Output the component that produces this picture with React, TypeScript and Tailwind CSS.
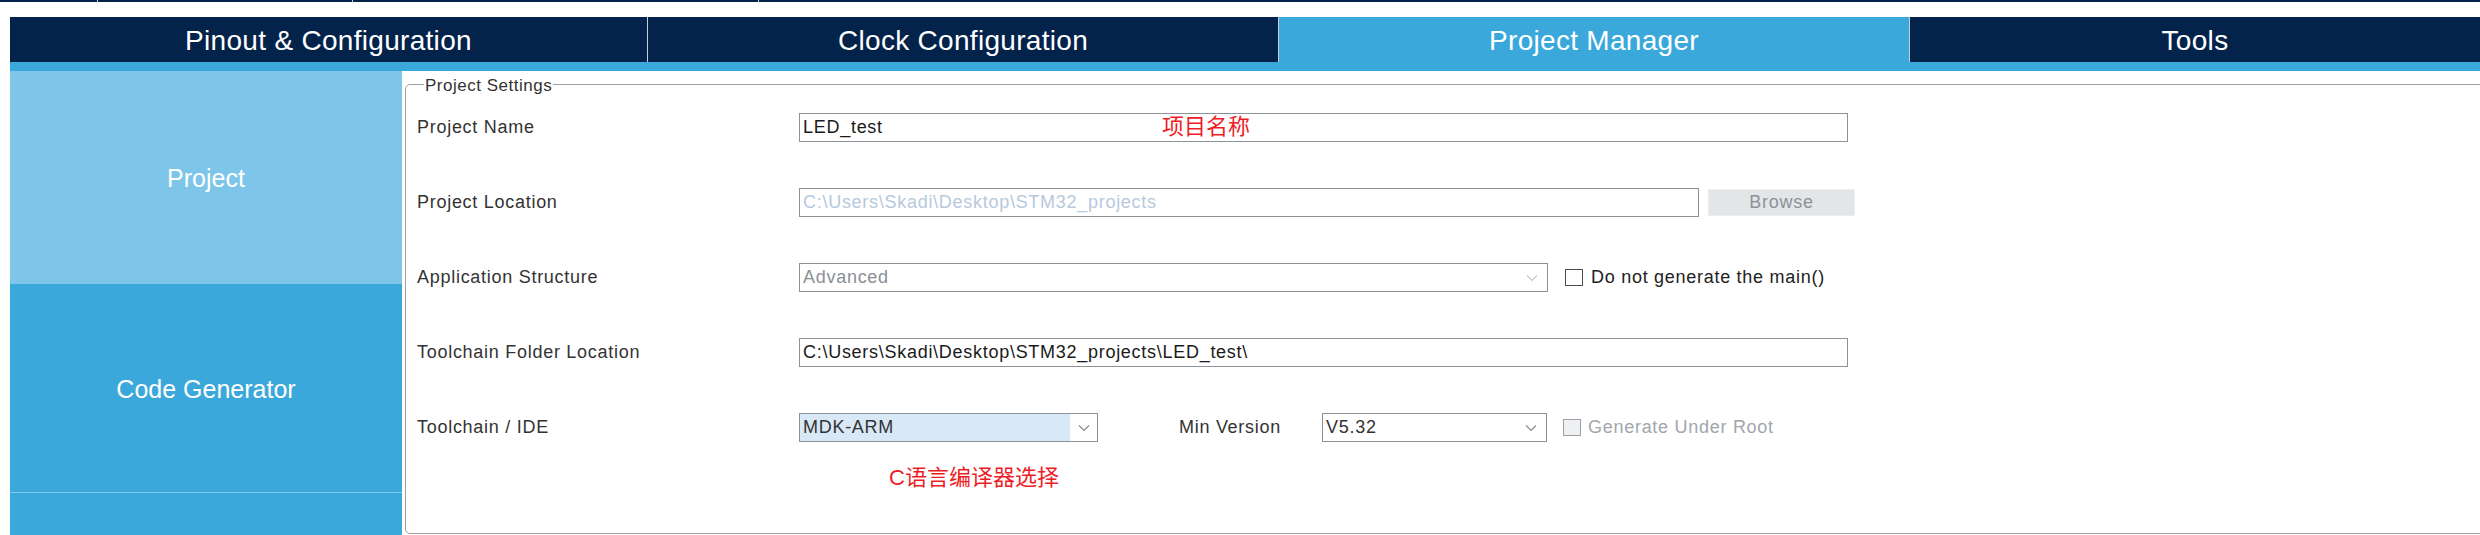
import React from 'react';

const tabs = [
  { label: 'Pinout & Configuration', width: 'w-[637px]', active: false },
  { label: 'Clock Configuration', width: 'w-[630px]', active: false },
  { label: 'Project Manager', width: 'w-[630px]', active: true },
  { label: 'Tools', width: 'flex-1', active: false },
];

function Chevron({ color }: { color: string }) {
  return (
    <svg width="12" height="8" viewBox="0 0 12 8" fill="none">
      <polyline points="1,1.5 6,6.5 11,1.5" stroke={color} strokeWidth="1.2" />
    </svg>
  );
}

function Label({ children }: { children: React.ReactNode }) {
  return <div className="w-[382px] shrink-0 text-[#333]">{children}</div>;
}

export default function App() {
  return (
    <div className="w-[2480px] h-[535px] overflow-hidden bg-white font-['Liberation_Sans','Noto_Sans_CJK_SC',Arial,sans-serif]">
      {/* thin strip of the window above */}
      <div className="flex h-[2px]">
        <div className="w-[97px] bg-[#03234b]" />
        <div className="w-px bg-[#c9d1da]" />
        <div className="w-[254px] bg-[#03234b]" />
        <div className="w-px bg-[#c9d1da]" />
        <div className="w-[405px] bg-[#03234b]" />
        <div className="w-px bg-[#c9d1da]" />
        <div className="flex-1 bg-[#03234b]" />
      </div>

      {/* main tabs */}
      <div className="mt-[15px] ml-[10px] flex h-[45px]">
        {tabs.map((t, i) => (
          <React.Fragment key={t.label}>
            {i > 0 && <div className="w-px bg-[#c5ced8]" />}
            <div
              className={`${t.width} flex items-center justify-center pt-[2px] text-[28px] tracking-[0.3px] text-white ${
                t.active ? 'bg-[#3aa8db]' : 'bg-[#03234b]'
              }`}
            >
              {t.label}
            </div>
          </React.Fragment>
        ))}
      </div>
      <div className="ml-[10px] h-[9px] bg-[#3aa8db]" />

      <div className="ml-[10px] flex">
        {/* sidebar */}
        <div className="w-[392px] shrink-0 flex flex-col text-[25px] text-white">
          <div className="h-[213px] bg-[#7dc6ea] flex items-center justify-center pt-[3px]">Project</div>
          <div className="h-[208px] bg-[#3aa8db] flex items-center justify-center pt-[4px]">Code Generator</div>
          <div className="h-px bg-[#82c8ec]" />
          <div className="h-[43px] bg-[#3aa8db]" />
        </div>

        {/* settings */}
        <fieldset className="ml-[3px] mt-[3px] h-[460px] w-[2100px] shrink-0 rounded-[5px] border border-[#9aa0a6] pl-[11px] text-[18px] tracking-[0.04em]">
          <legend className="ml-[7px] px-[1px] pt-[4px] text-[17px] leading-[16px] tracking-[0.03em] text-[#333]">
            Project Settings
          </legend>

          <div className="pt-[19px] flex flex-col gap-[46px]">
            {/* Project Name */}
            <div className="flex items-center h-[29px]">
              <Label>Project Name</Label>
              <div className="relative w-[1049px] h-[29px] border border-[#8d9298] pl-[3px] flex items-center text-[#1a1a1a]">
                LED_test
                <span className="absolute left-[362px] top-[-2px] leading-[29px] text-[22px] tracking-normal text-[#ee1c25]">
                  项目名称
                </span>
              </div>
            </div>

            {/* Project Location */}
            <div className="flex items-center h-[29px]">
              <Label>Project Location</Label>
              <div className="w-[900px] h-[29px] border border-[#8d9298] pl-[3px] flex items-center text-[#b6c9dd]">
                C:\Users\Skadi\Desktop\STM32_projects
              </div>
              <div className="ml-[9px] w-[147px] h-[27px] bg-[#e3e6e9] border border-[#eceef0] flex items-center justify-center text-[#8c9298]">
                Browse
              </div>
            </div>

            {/* Application Structure */}
            <div className="flex items-center h-[29px]">
              <Label>Application Structure</Label>
              <div className="w-[749px] h-[29px] border border-[#8d9298] pl-[3px] pr-[9px] flex items-center justify-between text-[#8a8f94]">
                <span>Advanced</span>
                <Chevron color="#c6c9cc" />
              </div>
              <div className="ml-[17px] w-[18px] h-[17px] border border-[#4d4d4d] bg-white" />
              <span className="ml-[8px] text-[#222]">Do not generate the main()</span>
            </div>

            {/* Toolchain Folder Location */}
            <div className="flex items-center h-[29px]">
              <Label>Toolchain Folder Location</Label>
              <div className="w-[1049px] h-[29px] border border-[#8d9298] pl-[3px] flex items-center text-[#1a1a1a]">
                C:\Users\Skadi\Desktop\STM32_projects\LED_test\
              </div>
            </div>

            {/* Toolchain / IDE */}
            <div className="flex items-center h-[29px]">
              <Label>Toolchain / IDE</Label>
              <div className="w-[299px] h-[29px] border border-[#8d9298] flex items-stretch text-[#333]">
                <div className="w-[270px] bg-[#d9e8f6] pl-[3px] flex items-center">MDK-ARM</div>
                <div className="flex-1 flex items-center justify-center bg-white">
                  <Chevron color="#8a8a8a" />
                </div>
              </div>
              <span className="ml-[81px] w-[143px] text-[#333]">Min Version</span>
              <div className="w-[225px] h-[29px] border border-[#8d9298] pl-[3px] pr-[9px] flex items-center justify-between text-[#333]">
                <span>V5.32</span>
                <Chevron color="#8a8a8a" />
              </div>
              <div className="ml-[16px] w-[18px] h-[17px] border border-[#9aa0a5] bg-[#eef0f2]" />
              <span className="ml-[7px] text-[#a2a6aa]">Generate Under Root</span>
            </div>
          </div>

          <div className="mt-[23px] ml-[472px] text-[22px] leading-[26px] tracking-normal text-[#ee1c25]">
            C语言编译器选择
          </div>
        </fieldset>
      </div>
    </div>
  );
}
